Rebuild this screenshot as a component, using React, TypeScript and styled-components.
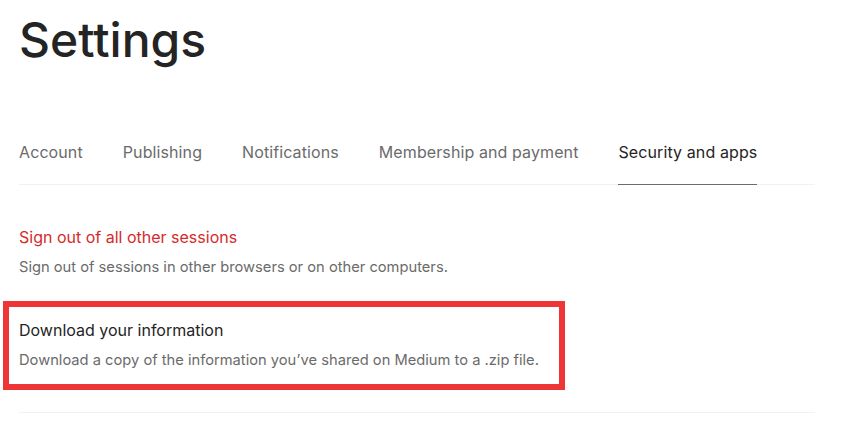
import styled, { createGlobalStyle } from 'styled-components';

const GlobalStyle = createGlobalStyle`
  body {
    margin: 0;
    background: #ffffff;
    font-family: Inter, "Liberation Sans", sans-serif;
    color: #242424;
  }
`;

const Page = styled.main`
  width: 796px;
  padding: 10px 0 0 19px;
`;

const Title = styled.h1`
  margin: 0;
  font-size: 48px;
  line-height: 60px;
  font-weight: 500;
  color: #242424;
`;

const Tabs = styled.nav`
  display: flex;
  gap: 40px;
  margin-top: 70px;
  border-bottom: 1px solid #f2f2f2;
`;

interface TabProps {
  $active?: boolean;
}

const Tab = styled.a<TabProps>`
  display: block;
  padding-bottom: 20px;
  font-size: 16px;
  line-height: 24px;
  letter-spacing: 0.1px;
  color: ${p => (p.$active ? '#242424' : '#6b6b6b')};
  border-bottom: 1px solid ${p => (p.$active ? '#6b6b6b' : 'transparent')};
  margin-bottom: -1px;
  cursor: pointer;
`;

const Item = styled.section`
  margin-top: 42px;
`;

const Highlight = styled.section`
  margin: 24px 0 0 -16px;
  width: 540px;
  padding: 13px 0 14px 10px;
  border: 6px solid #ee3636;
`;

interface HeadProps {
  $danger?: boolean;
}

const Head = styled.h2<HeadProps>`
  margin: 0;
  font-size: 16px;
  line-height: 20px;
  font-weight: 400;
  color: ${p => (p.$danger ? '#d42b2b' : '#242424')};
`;

const Desc = styled.p`
  margin: 10px 0 0;
  font-size: 14.7px;
  line-height: 20px;
  color: #6b6b6b;
`;

const Divider = styled.hr`
  margin: 22px 0 0;
  border: 0;
  border-top: 1px solid #f2f2f2;
`;

const tabs = ['Account', 'Publishing', 'Notifications', 'Membership and payment', 'Security and apps'];

const App = () => (
  <Page>
    <GlobalStyle />
    <Title>Settings</Title>
    <Tabs>
      {tabs.map(t => (
        <Tab key={t} $active={t === 'Security and apps'}>
          {t}
        </Tab>
      ))}
    </Tabs>
    <Item>
      <Head $danger>Sign out of all other sessions</Head>
      <Desc>Sign out of sessions in other browsers or on other computers.</Desc>
    </Item>
    <Highlight>
      <Head>Download your information</Head>
      <Desc>Download a copy of the information you’ve shared on Medium to a .zip file.</Desc>
    </Highlight>
    <Divider />
  </Page>
);

export default App;
